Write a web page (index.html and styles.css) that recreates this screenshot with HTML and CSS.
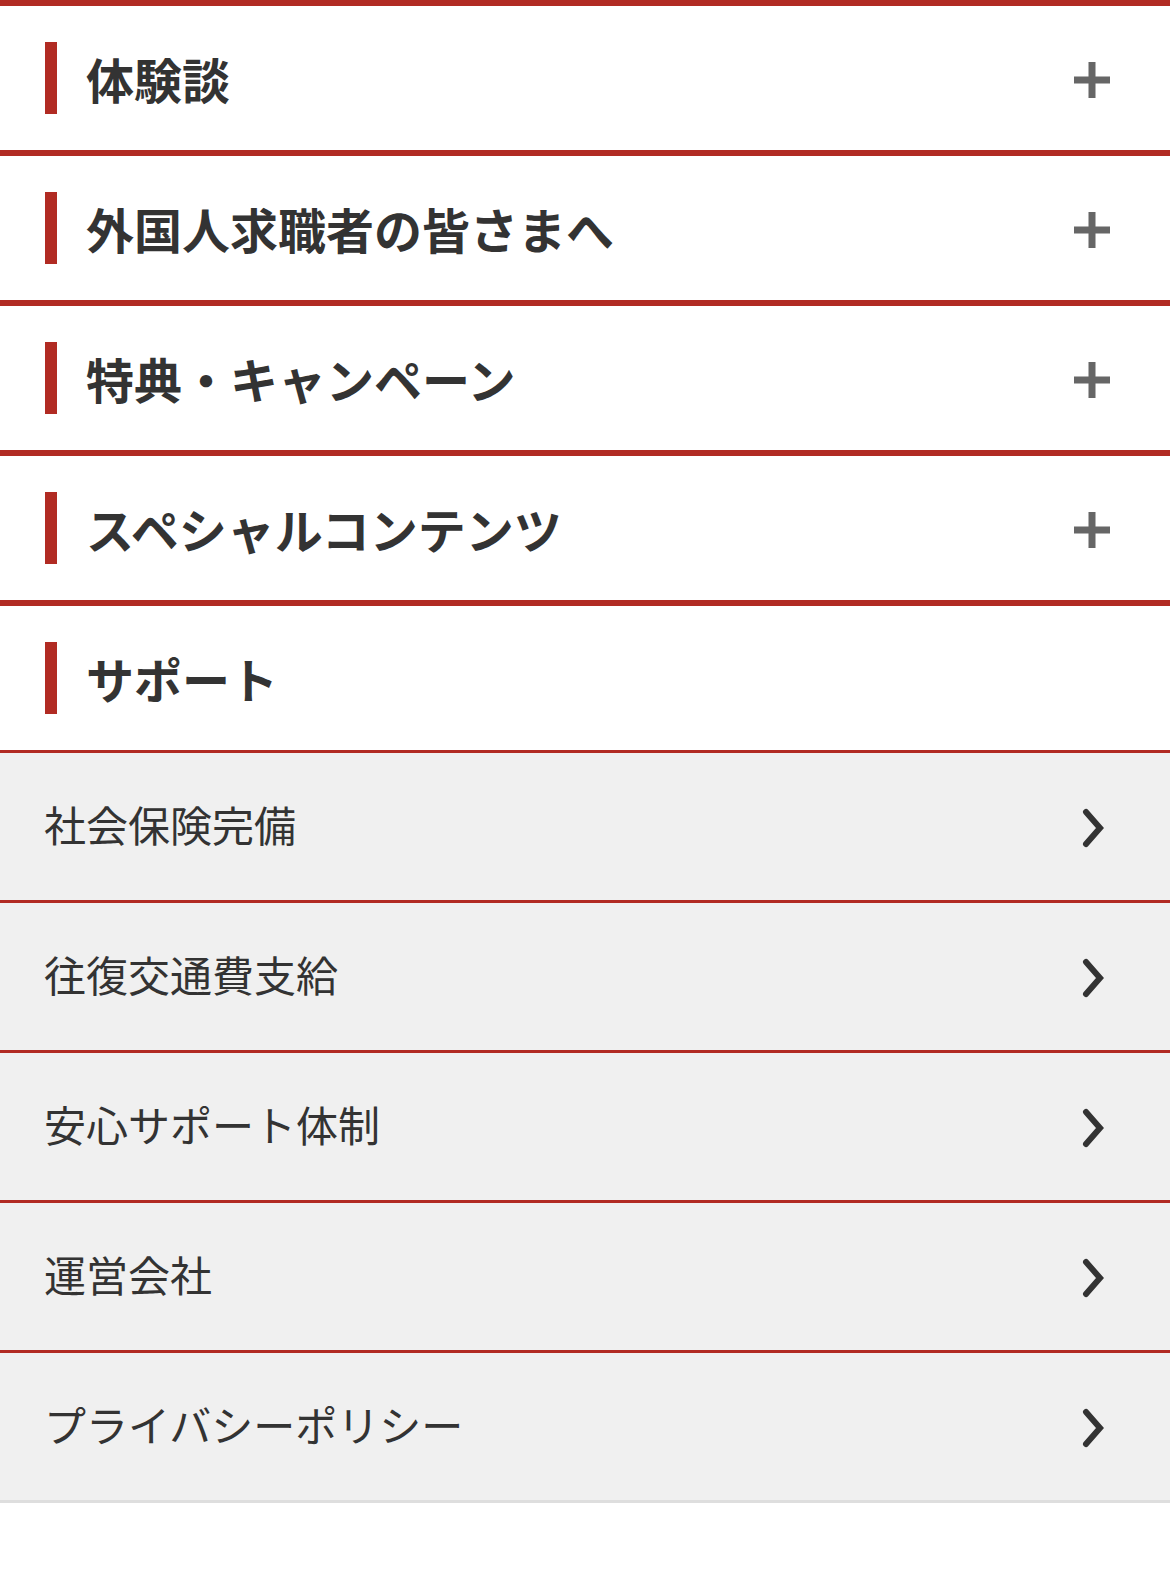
FILE: index.html
```html
<!DOCTYPE html>
<html lang="ja">
<head>
    <meta charset="UTF-8">
    <meta name="viewport" content="width=device-width, initial-scale=1.0">
    <title>メニュー</title>
    <link rel="stylesheet" href="styles.css">
</head>
<body>
    <nav class="menu">
        <!-- 開閉できる項目 -->
        <div class="section">
            <span class="section-title">体験談</span>
            <svg class="plus" width="36" height="36" viewBox="0 0 36 36"><rect x="14.5" y="0" width="7" height="36"/><rect x="0" y="14.5" width="36" height="7"/></svg>
        </div>
        <div class="section">
            <span class="section-title">外国人求職者の皆さまへ</span>
            <svg class="plus" width="36" height="36" viewBox="0 0 36 36"><rect x="14.5" y="0" width="7" height="36"/><rect x="0" y="14.5" width="36" height="7"/></svg>
        </div>
        <div class="section">
            <span class="section-title">特典・キャンペーン</span>
            <svg class="plus" width="36" height="36" viewBox="0 0 36 36"><rect x="14.5" y="0" width="7" height="36"/><rect x="0" y="14.5" width="36" height="7"/></svg>
        </div>
        <div class="section">
            <span class="section-title">スペシャルコンテンツ</span>
            <svg class="plus" width="36" height="36" viewBox="0 0 36 36"><rect x="14.5" y="0" width="7" height="36"/><rect x="0" y="14.5" width="36" height="7"/></svg>
        </div>

        <!-- サポート -->
        <div class="section open">
            <span class="section-title">サポート</span>
        </div>
        <ul class="links">
            <li><a href="#"><span>社会保険完備</span><svg class="chevron" width="26" height="42" viewBox="0 0 26 42"><polyline points="5,5 19,21 5,37"/></svg></a></li>
            <li><a href="#"><span>往復交通費支給</span><svg class="chevron" width="26" height="42" viewBox="0 0 26 42"><polyline points="5,5 19,21 5,37"/></svg></a></li>
            <li><a href="#"><span>安心サポート体制</span><svg class="chevron" width="26" height="42" viewBox="0 0 26 42"><polyline points="5,5 19,21 5,37"/></svg></a></li>
            <li><a href="#"><span>運営会社</span><svg class="chevron" width="26" height="42" viewBox="0 0 26 42"><polyline points="5,5 19,21 5,37"/></svg></a></li>
            <li><a href="#"><span>プライバシーポリシー</span><svg class="chevron" width="26" height="42" viewBox="0 0 26 42"><polyline points="5,5 19,21 5,37"/></svg></a></li>
        </ul>
    </nav>
</body>
</html>
```

FILE: styles.css
```css
body {
    margin: 0;
    background: #fff;
    font-family: "Noto Sans CJK JP", "Noto Sans", sans-serif;
    color: #333;
}

.menu {
    width: 1170px;
}

.section {
    display: flex;
    align-items: center;
    justify-content: space-between;
    height: 144px;
    border-top: 6px solid #b12b23;
    padding: 0 60px 0 45px;
}

.section-title {
    display: flex;
    align-items: center;
    font-size: 48px;
    font-weight: 700;
    line-height: 1;
}

.section-title::before {
    content: "";
    display: block;
    width: 12px;
    height: 72px;
    margin-right: 29px;
    background: #b12b23;
}

.plus {
    display: block;
    margin-top: 3px;
    fill: #666;
}

.links {
    list-style: none;
    margin: 0;
    padding: 0;
    border-bottom: 3px solid #dedede;
}

.links li {
    border-top: 3px solid #b12b23;
    background: #f0f0f0;
}

.links a {
    display: flex;
    align-items: center;
    justify-content: space-between;
    height: 147px;
    padding: 0 63px 0 44px;
    font-size: 42px;
    line-height: 1;
    color: #333;
    text-decoration: none;
}

.links a span {
    margin-top: -5px;
}

.chevron {
    display: block;
    margin-top: 2px;
    fill: none;
    stroke: #333;
    stroke-width: 6;
    stroke-linecap: round;
    stroke-linejoin: miter;
}
```
